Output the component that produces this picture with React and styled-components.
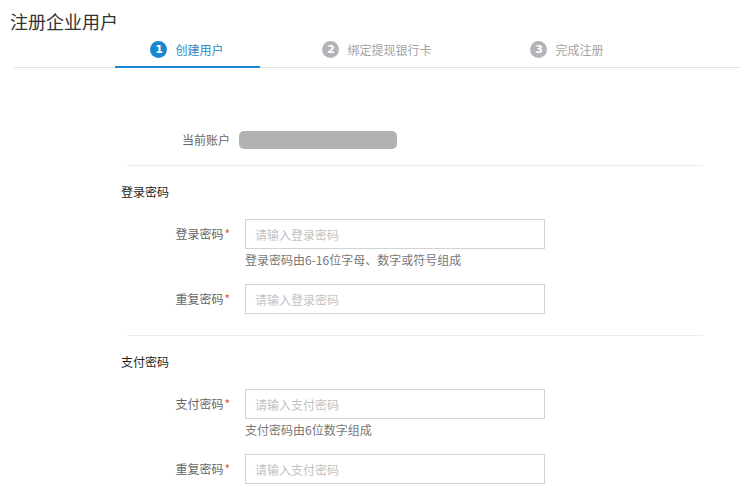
import styled, { createGlobalStyle } from "styled-components";

const GlobalStyle = createGlobalStyle`
  body {
    margin: 0;
    background: #fff;
    font-family: "Noto Sans CJK SC", "Noto Sans", sans-serif;
    font-size: 12px;
    color: #333;
  }
`;

const steps = [
  { num: 1, text: "创建用户", active: true },
  { num: 2, text: "绑定提现银行卡" },
  { num: 3, text: "完成注册" },
];

const sections = [
  {
    title: "登录密码",
    gap: 16,
    fields: [
      { label: "登录密码", placeholder: "请输入登录密码", hint: "登录密码由6-16位字母、数字或符号组成" },
      { label: "重复密码", placeholder: "请输入登录密码" },
    ],
  },
  {
    title: "支付密码",
    gap: 21,
    fields: [
      { label: "支付密码", placeholder: "请输入支付密码", hint: "支付密码由6位数字组成" },
      { label: "重复密码", placeholder: "请输入支付密码" },
    ],
  },
];

const App = () => {
  return (
    <Page>
      <GlobalStyle />
      <Title>注册企业用户</Title>
      <Steps>
        {steps.map((s) => (
          <Step key={s.num} $active={s.active}>
            <StepNum $active={s.active}>{s.num}</StepNum>
            <span>{s.text}</span>
          </Step>
        ))}
      </Steps>

      <Form>
        <AccountRow>
          <Label>当前账户</Label>
          <AccountMask />
        </AccountRow>

        {sections.map((sec) => (
          <div key={sec.title}>
            <Divider $gap={sec.gap} />
            <SectionTitle>{sec.title}</SectionTitle>
            {sec.fields.map((f, i) => (
              <Field key={i}>
                <Label>
                  {f.label}
                  <Star>*</Star>
                </Label>
                <Control>
                  <Input type="password" placeholder={f.placeholder} />
                  {f.hint && <Hint>{f.hint}</Hint>}
                </Control>
              </Field>
            ))}
          </div>
        ))}
      </Form>
    </Page>
  );
};

const Page = styled.div`
  width: 746px;
  min-height: 501px;
  overflow: hidden;
`;

const Title = styled.h1`
  margin: 9px 0 0 10px;
  font-size: 18px;
  font-weight: 400;
  line-height: 24px;
  color: #333;
`;

const Steps = styled.div`
  display: flex;
  justify-content: center;
  gap: 45px;
  margin: 0 6px 0 14px;
  border-bottom: 1px solid #e2e2e2;
`;

const Step = styled.div`
  width: 145px;
  height: 33px;
  display: flex;
  align-items: center;
  justify-content: center;
  gap: 8px;
  margin-bottom: -1px;
  border-bottom: 2px solid ${(p) => (p.$active ? "#1a87cf" : "transparent")};
  color: ${(p) => (p.$active ? "#2a86cc" : "#a3a3a3")};
  font-size: 12px;
`;

const StepNum = styled.span`
  width: 17px;
  height: 17px;
  border-radius: 50%;
  background: ${(p) => (p.$active ? "#1787d0" : "#b3b3b8")};
  color: #fff;
  font-family: "DejaVu Sans", sans-serif;
  font-weight: 700;
  font-size: 11px;
  display: flex;
  align-items: center;
  justify-content: center;
`;

const Form = styled.div`
  margin: 63px 43px 0 121px;
`;

const AccountRow = styled.div`
  display: flex;
  align-items: center;
  height: 18px;
`;

const Label = styled.div`
  width: 109px;
  flex-shrink: 0;
  text-align: right;
  color: #666;
  line-height: 18px;
`;

const AccountMask = styled.div`
  width: 158px;
  height: 18px;
  margin-left: 9px;
  border-radius: 5px;
  background: #b2b2b2;
`;

const Divider = styled.div`
  height: 1px;
  background: #ececec;
  margin: ${(p) => p.$gap}px 0 0 6px;
`;

const SectionTitle = styled.div`
  margin-top: 16px;
  line-height: 20px;
  color: #222;
`;

const Field = styled.div`
  display: flex;
  align-items: flex-start;
  margin-top: 17px;
  & + & {
    margin-top: 14px;
  }
  ${Label} {
    line-height: 30px;
  }
`;

const Star = styled.span`
  color: #e2563f;
  margin-left: 1px;
`;

const Control = styled.div`
  margin-left: 15px;
  display: flex;
  flex-direction: column;
`;

const Input = styled.input`
  box-sizing: border-box;
  width: 300px;
  height: 30px;
  margin: 0;
  padding: 0 9px;
  border: 1px solid #d3d3d3;
  border-radius: 0;
  outline: none;
  font-family: "Noto Sans CJK SC", "Noto Sans", sans-serif;
  font-size: 12px;
  color: #333;
  &::placeholder {
    color: #c2c2c2;
  }
`;

const Hint = styled.div`
  margin-top: 1px;
  line-height: 20px;
  color: #777;
`;

export default App;
